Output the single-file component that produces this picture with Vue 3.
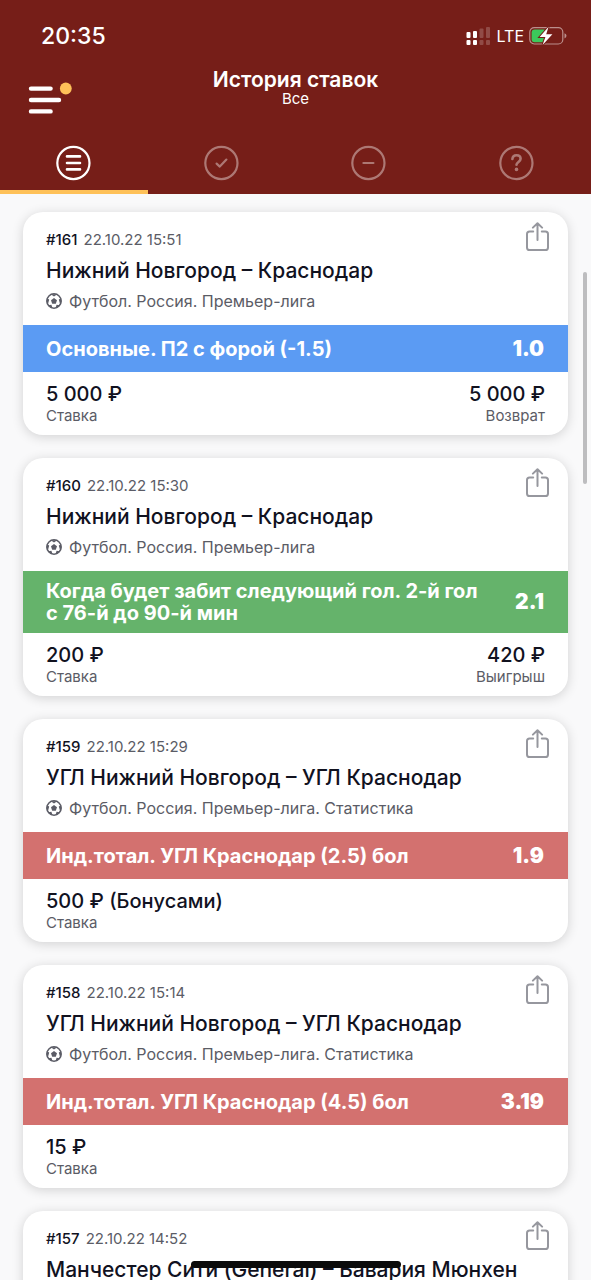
<script setup>
import { ref } from 'vue'

const tabs = [
  { id: 'all', label: 'Все' },
  { id: 'won', label: 'Выигранные' },
  { id: 'lost', label: 'Проигранные' },
  { id: 'open', label: 'Нерассчитанные' },
]
const active = ref('all')

const bets = [
  {
    id: '#161', date: '22.10.22 15:51', match: 'Нижний Новгород – Краснодар',
    league: 'Футбол. Россия. Премьер-лига', market: 'Основные. П2 с форой (-1.5)',
    odds: '1.0', tone: 'refund', stake: '5 000 ₽', payout: '5 000 ₽', payoutLabel: 'Возврат',
  },
  {
    id: '#160', date: '22.10.22 15:30', match: 'Нижний Новгород – Краснодар',
    league: 'Футбол. Россия. Премьер-лига', market: 'Когда будет забит следующий гол. 2-й гол с\u00a076-й до 90-й мин',
    odds: '2.1', tone: 'won', stake: '200 ₽', payout: '420 ₽', payoutLabel: 'Выигрыш',
  },
  {
    id: '#159', date: '22.10.22 15:29', match: 'УГЛ Нижний Новгород – УГЛ Краснодар',
    league: 'Футбол. Россия. Премьер-лига. Статистика', market: 'Инд.тотал. УГЛ Краснодар (2.5) бол',
    odds: '1.9', tone: 'lost', stake: '500 ₽ (Бонусами)',
  },
  {
    id: '#158', date: '22.10.22 15:14', match: 'УГЛ Нижний Новгород – УГЛ Краснодар',
    league: 'Футбол. Россия. Премьер-лига. Статистика', market: 'Инд.тотал. УГЛ Краснодар (4.5) бол',
    odds: '3.19', tone: 'lost', stake: '15 ₽',
  },
  { id: '#157', date: '22.10.22 14:52', match: 'Манчестер Сити (General) – Бавария Мюнхен' },
]
</script>

<template>
  <div class="screen">
    <header class="top">
      <div class="status">
        <time class="clock">20:35</time>
        <div class="indicators">
          <svg class="signal" width="25" height="20" viewBox="0 0 25 20" fill="#fff" aria-hidden="true">
            <rect x="0.5" y="6" width="4" height="6" rx="1" />
            <rect x="7" y="5" width="4" height="7" rx="1" />
            <g opacity="0.2">
              <rect x="13.5" y="2.5" width="4" height="9.5" rx="1" />
              <rect x="20" y="1" width="4" height="11" rx="1" />
              <rect x="13.5" y="14" width="4" height="5" rx="1" />
              <rect x="20" y="14" width="4" height="5" rx="1" />
            </g>
            <rect x="0.5" y="14" width="4" height="5" rx="1" />
            <rect x="7" y="14" width="4" height="5" rx="1" />
          </svg>
          <span class="network">LTE</span>
          <svg width="38" height="20" viewBox="0 0 38 20" aria-hidden="true">
            <rect x="0.8" y="1.6" width="33" height="16.4" rx="4.5" fill="none" stroke="#fff" stroke-opacity="0.5" stroke-width="1.2" />
            <path d="M35.5 7.2v5.2q2-.8 2-2.6t-2-2.6z" fill="#fff" fill-opacity="0.5" />
            <path d="M5.6 3.4H15.6V16.2H5.6Q2.6 16.2 2.6 13.2V6.4Q2.6 3.4 5.6 3.4z" fill="#3cc95b" />
            <path d="M19.6 0.8L10.6 10.9h5.8l-2.8 8L23.4 8.3h-6.2z" fill="#fff" stroke="#761e18" stroke-width="2" paint-order="stroke" />
          </svg>
        </div>
      </div>

      <div class="nav">
        <button class="menu" type="button" aria-label="Меню">
          <svg width="44" height="32" viewBox="0 0 44 32" aria-hidden="true">
            <g stroke="#fff" stroke-width="4.4" stroke-linecap="round">
              <path d="M3 6.6h19.6M3 18h28M3 29.4h19.6" />
            </g>
            <circle cx="37.8" cy="6.5" r="5.9" fill="#fec159" />
          </svg>
        </button>
        <div class="heading">
          <h1>История ставок</h1>
          <p>Все</p>
        </div>
      </div>

      <nav class="tabs">
        <button
          v-for="tab in tabs"
          :key="tab.id"
          type="button"
          class="tab"
          :class="{ active: active === tab.id }"
          :aria-label="tab.label"
          @click="active = tab.id"
        >
          <svg width="36" height="36" viewBox="0 0 36 36" fill="none" stroke="#fff" stroke-width="2.2" stroke-linecap="round" stroke-linejoin="round" aria-hidden="true">
            <circle cx="17.4" cy="18" r="16.1" stroke-width="2.2" />
            <path v-if="tab.id === 'all'" d="M11 11.4h13M11 18h13M11 24.4h13" stroke-width="2.6" />
            <path v-else-if="tab.id === 'won'" d="M12.6 18.6l3.2 3 6.6-7" stroke-width="2.2" />
            <path v-else-if="tab.id === 'lost'" d="M12.4 18h10" />
            <g v-else stroke-width="2.6">
              <path d="M13.4 14c.2-2.4 1.8-3.8 4.1-3.8 2.4 0 4.1 1.4 4.1 3.6 0 3-4.1 3.2-4.1 6" />
              <circle cx="17.5" cy="24.4" r="1.8" fill="#fff" stroke="none" />
            </g>
          </svg>
        </button>
      </nav>
    </header>

    <div class="body">
      <main class="list">
        <article v-for="bet in bets" :key="bet.id" class="card">
          <div class="head">
            <div class="info">
              <p class="meta"><b>{{ bet.id }}</b><time>{{ bet.date }}</time></p>
              <h2>{{ bet.match }}</h2>
              <p v-if="bet.league" class="league">
                <svg width="16" height="16" viewBox="0 0 16 16" aria-hidden="true">
                  <circle cx="8" cy="8" r="7.2" fill="none" stroke="#5b5c66" stroke-width="1.5" />
                  <g fill="#5b5c66">
                    <path d="M8 5l3 2.2-1.2 3.5H6.2L5 7.2z" />
                    <path d="M4.8 1.2h6.4L8 3.6zM.8 5.2l2.4 1.4-1 3.6L.8 9.4zM15.2 5.2l-2.4 1.4 1 3.6 1.4-.8zM2.4 12.2l3-.4 1.1 3.2-2.2-.4zM13.6 12.2l-3-.4-1.1 3.2 2.2-.4z" />
                  </g>
                </svg>
                <span>{{ bet.league }}</span>
              </p>
            </div>
            <button class="share" type="button" aria-label="Поделиться">
              <svg width="24" height="30" viewBox="0 0 24 30" fill="none" stroke="#96979e" stroke-width="2" stroke-linecap="round" stroke-linejoin="round" aria-hidden="true">
                <path d="M8.2 9.4H4.6Q2 9.4 2 12V25.4Q2 28 4.6 28H20.4Q23 28 23 25.4V12Q23 9.4 20.4 9.4H16.8" />
                <path d="M12.5 18V1.4M7.9 5.6L12.5 1.2 17.1 5.6" />
              </svg>
            </button>
          </div>
          <div v-if="bet.market" class="market" :class="bet.tone">
            <span>{{ bet.market }}</span>
            <strong>{{ bet.odds }}</strong>
          </div>
          <dl v-if="bet.stake" class="sums">
            <div>
              <dd>{{ bet.stake }}</dd>
              <dt>Ставка</dt>
            </div>
            <div v-if="bet.payout" class="payout">
              <dd>{{ bet.payout }}</dd>
              <dt>{{ bet.payoutLabel }}</dt>
            </div>
          </dl>
        </article>
      </main>
      <div class="thumb"></div>
    </div>
    <div class="home-bar"></div>
  </div>
</template>

<style>
body {
  margin: 0;
  background: #f9f9fa;
}
</style>

<style scoped>
* {
  box-sizing: border-box;
}
h1, h2, p, dl, dd, dt {
  margin: 0;
}
button {
  padding: 0;
  border: 0;
  background: none;
  cursor: pointer;
}
svg {
  display: block;
  flex: none;
}
.screen {
  position: relative;
  display: flex;
  flex-direction: column;
  height: 100vh;
  overflow: hidden;
  font-family: Inter, "Open Sans", sans-serif;
  color: #11121f;
  background: #f9f9fa;
}
.top {
  flex: none;
  color: #fff;
  background: #761e18;
}
.status {
  display: flex;
  align-items: center;
  justify-content: space-between;
  padding: 22px 24px 0 41px;
}
.clock {
  font-size: 23px;
  font-weight: 500;
  line-height: 28px;
}
.indicators {
  display: flex;
  align-items: center;
}
.network {
  margin: 0 5px 0 6px;
  font-size: 16px;
  line-height: 20px;
}
.nav {
  display: grid;
  grid-template-columns: 1fr auto 1fr;
  padding: 19px 28px 0;
}
.menu {
  justify-self: start;
  align-self: start;
  padding-top: 13px;
}
.heading {
  text-align: center;
}
.heading h1 {
  font-size: 21px;
  font-weight: 600;
  line-height: 21px;
}
.heading p {
  font-size: 15px;
  line-height: 17px;
}
.tabs {
  display: grid;
  grid-template-columns: repeat(4, 1fr);
  padding-top: 18px;
}
.tab {
  display: flex;
  justify-content: center;
  padding: 13px 0 9px;
  border-bottom: 4px solid transparent;
}
.tab svg {
  opacity: 0.4;
}
.tab.active {
  border-color: #fec159;
}
.tab.active svg {
  opacity: 1;
}
.body {
  position: relative;
  flex: 1;
  min-height: 0;
}
.list {
  display: flex;
  flex-direction: column;
  gap: 23px;
  height: 100%;
  padding: 18px 23px;
  overflow-y: auto;
  scrollbar-width: none;
}
.card {
  flex: none;
  border-radius: 20px;
  background: #fff;
  box-shadow: 0 2px 12px rgba(0, 0, 0, 0.16);
}
.head {
  display: flex;
  align-items: flex-start;
  justify-content: space-between;
  padding: 10px 19px 14px 23px;
}
.info {
  padding-top: 8px;
}
.meta {
  display: flex;
  gap: 6px;
  font-size: 15px;
  line-height: 20px;
  color: #5b5c66;
}
.meta b {
  font-weight: 500;
  color: #11121f;
}
h2 {
  margin: 7px 0 6px;
  font-size: 21px;
  font-weight: 500;
  line-height: 28px;
}
.league {
  display: flex;
  align-items: center;
  gap: 7px;
  font-size: 16px;
  line-height: 20px;
  color: #5b5c66;
}
.market {
  display: flex;
  align-items: center;
  justify-content: space-between;
  gap: 24px;
  min-height: 47px;
  padding: 9px 24px 9px 23px;
  font-size: 20px;
  font-weight: 700;
  line-height: 22px;
  color: #fff;
}
.market strong {
  font-size: 21px;
}
.refund {
  background: #5b9bf3;
}
.won {
  background: #65b36b;
}
.lost {
  background: #d3716f;
}
.sums {
  display: flex;
  justify-content: space-between;
  padding: 10px 23px 9px;
}
.sums div {
  display: flex;
  flex-direction: column;
}
.sums dd {
  font-size: 20px;
  font-weight: 500;
  line-height: 24px;
}
.sums dt {
  font-size: 15px;
  line-height: 20px;
  color: #5b5c66;
}
.payout {
  text-align: right;
}
.thumb {
  position: absolute;
  top: 78px;
  right: 4px;
  width: 4px;
  height: 212px;
  border-radius: 2px;
  background: #bdbdbf;
}
.home-bar {
  position: absolute;
  bottom: 12px;
  left: 50%;
  width: 210px;
  height: 7px;
  margin-left: -105px;
  border-radius: 4px;
  background: #0b0b0b;
}
</style>
